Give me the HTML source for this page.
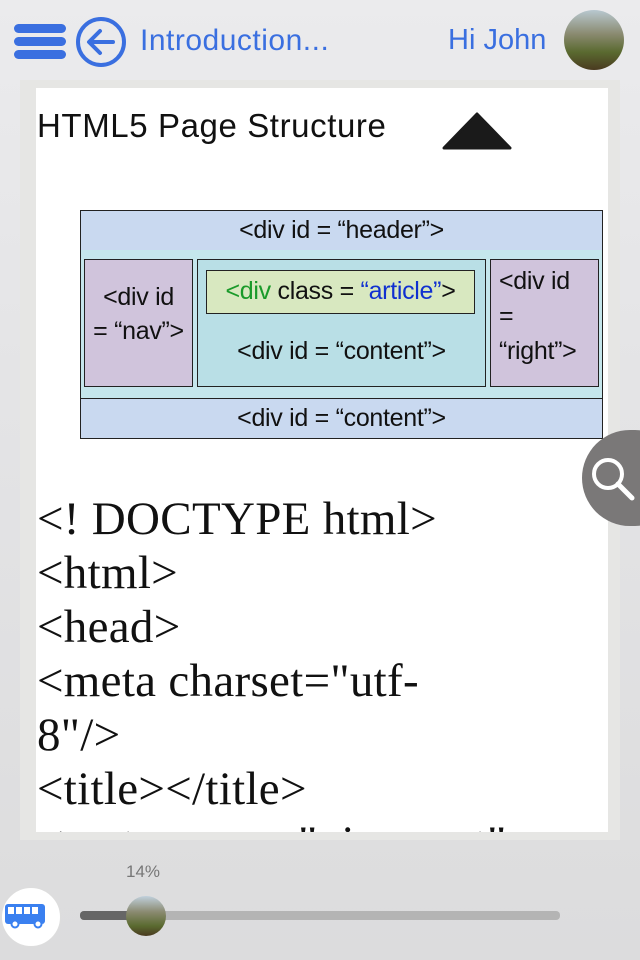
<!DOCTYPE html>
<html><head><style>
body{margin:0;width:640px;height:960px;overflow:hidden;background:linear-gradient(180deg,#ebebed 0%,#e4e4e6 40%,#dcdcdd 100%);font-family:"Liberation Sans",sans-serif;position:relative}
.a{position:absolute}
.box{position:absolute;border:1.5px solid #222;box-sizing:border-box;font-size:25px;color:#111;text-align:center;letter-spacing:-0.3px}
.code{font-family:"Liberation Serif",serif;font-size:47px;line-height:54px;color:#111;letter-spacing:0.3px}
</style></head><body>
<div class="a" style="left:14px;top:24px;width:52px;height:9px;background:#3a6fe0;border-radius:5px"></div>
<div class="a" style="left:14px;top:37px;width:52px;height:9px;background:#3a6fe0;border-radius:5px"></div>
<div class="a" style="left:14px;top:50px;width:52px;height:9px;background:#3a6fe0;border-radius:5px"></div>
<svg class="a" style="left:75px;top:16px" width="52" height="52" viewBox="0 0 52 52"><circle cx="26" cy="26" r="23" fill="none" stroke="#3a6fe0" stroke-width="4"/><path d="M38 26H15M25 15L14 26L25 37" fill="none" stroke="#3a6fe0" stroke-width="4" stroke-linecap="round" stroke-linejoin="round"/></svg>
<div class="a" style="left:140px;top:24px;font-size:30px;color:#3a6fe0;letter-spacing:0.5px">Introduction...</div>
<div class="a" style="left:448px;top:24px;font-size:29px;color:#3a6fe0">Hi John</div>
<div class="a" style="left:564px;top:10px;width:60px;height:60px;border-radius:50%;background:linear-gradient(180deg,#b8c8d0 0%,#8a8a70 40%,#5a6a30 70%,#4a3a20 100%)"></div>
<div class="a" style="left:20px;top:80px;width:600px;height:760px;background:#e6e6e4"></div>
<div class="a" style="left:36px;top:88px;width:572px;height:744px;background:#fff;overflow:hidden">
<div class="a" style="left:1px;top:19px;font-size:33px;color:#111;letter-spacing:0.6px">HTML5 Page Structure</div>
<svg class="a" style="left:406px;top:24px" width="70" height="38"><path d="M35 2L68 36H2Z" fill="#1a1a1a" stroke="#1a1a1a" stroke-linejoin="round" stroke-width="3"/></svg>
<div class="box" style="left:44px;top:122px;width:523px;height:41px;background:#c9d9f0;line-height:38px">&lt;div id = “header”&gt;</div>
<div class="a" style="left:44px;top:162px;width:523px;height:149px;border-left:1.5px solid #222;border-right:1.5px solid #222;box-sizing:border-box;background:#c5e6ec"></div>
<div class="box" style="left:48px;top:171px;width:109px;height:128px;background:#d0c4dc;line-height:34px;padding-top:20px">&lt;div id<br>= “nav”&gt;</div>
<div class="box" style="left:161px;top:171px;width:289px;height:128px;background:#b9dfe6;line-height:38px;padding-top:72px">&lt;div id = “content”&gt;</div>
<div class="box" style="left:170px;top:182px;width:269px;height:44px;background:#d8e8c0;line-height:40px"><span style="color:#1a9a2a">&lt;div</span> class = <span style="color:#1030d0">“article”</span>&gt;</div>
<div class="box" style="left:454px;top:171px;width:109px;height:128px;background:#d0c4dc;line-height:35px;text-align:left;padding:4px 0 0 8px">&lt;div id<br>=<br>“right”&gt;</div>
<div class="box" style="left:44px;top:310px;width:523px;height:41px;background:#c9d9f0;line-height:38px">&lt;div id = “content”&gt;</div>
<div class="a code" style="left:1px;top:404px">&lt;! DOCTYPE html&gt;<br>&lt;html&gt;<br>&lt;head&gt;<br>&lt;meta charset="utf-<br>8"/&gt;<br>&lt;title&gt;&lt;/title&gt;<br>&lt;meta name="viewport"</div>
</div>
<div class="a" style="left:582px;top:430px;width:100px;height:96px;border-radius:48px;background:#7a7878"></div>
<svg class="a" style="left:588px;top:454px" width="50" height="50"><circle cx="20" cy="20" r="14" fill="none" stroke="#fff" stroke-width="4"/><path d="M30 30L44 44" stroke="#fff" stroke-width="5" stroke-linecap="round"/></svg>
<div class="a" style="left:126px;top:862px;font-size:17px;color:#777">14%</div>
<div class="a" style="left:80px;top:911px;width:480px;height:9px;background:#b4b4b4;border-radius:4px"></div>
<div class="a" style="left:80px;top:911px;width:60px;height:9px;background:#666;border-radius:4px"></div>
<div class="a" style="left:126px;top:896px;width:40px;height:40px;border-radius:50%;background:linear-gradient(180deg,#c0d0dc 0%,#8a8a70 40%,#5a6a30 75%,#4a3a20 100%)"></div>
<div class="a" style="left:1px;top:887px;width:58px;height:58px;border-radius:50%;background:#fff;border:1px solid #ddd"></div>
<svg class="a" style="left:5px;top:903px" width="42" height="26"><rect x="0" y="1" width="40" height="20" rx="3" fill="#3a80f0"/><rect x="3" y="4" width="6" height="7" fill="#fff"/><rect x="11" y="4" width="6" height="7" fill="#fff"/><rect x="19" y="4" width="6" height="7" fill="#fff"/><rect x="27" y="4" width="6" height="7" fill="#fff"/><circle cx="10" cy="21" r="3.5" fill="#fff" stroke="#3a80f0" stroke-width="2"/><circle cx="33" cy="21" r="3.5" fill="#fff" stroke="#3a80f0" stroke-width="2"/></svg>
</body></html>
